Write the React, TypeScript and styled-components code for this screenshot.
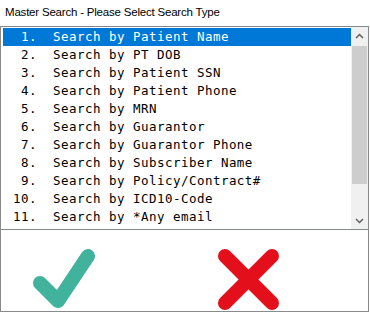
import React from 'react';
import styled, { createGlobalStyle } from 'styled-components';

const GlobalStyle = createGlobalStyle`
  html, body {
    margin: 0;
    padding: 0;
    background: #ffffff;
  }
`;

const Window = styled.div`
  width: 369px;
  height: 312px;
  display: flex;
  flex-direction: column;
  background: #ffffff;
  font-family: 'Liberation Sans', Arial, sans-serif;
`;

const TitleBar = styled.div`
  height: 26px;
  line-height: 25px;
  padding-left: 5px;
  font-size: 11.5px;
  letter-spacing: -0.2px;
  color: #000000;
  white-space: nowrap;
`;

const Frame = styled.div`
  flex: 1;
  display: flex;
  flex-direction: column;
  border: 1px solid #8a8a8a;
  border-top: none;
`;

const ListBox = styled.div`
  height: 202px;
  display: flex;
  border-top: 1px solid #828790;
  border-bottom: 1px solid #828790;
`;

const Rows = styled.div`
  flex: 1;
  padding: 1px 0 0 2px;
  display: flex;
  flex-direction: column;
`;

const Row = styled.div<{ $selected?: boolean }>`
  height: 18px;
  line-height: 18px;
  padding-left: 2px;
  font-family: 'DejaVu Sans Mono', 'Liberation Mono', monospace;
  font-size: 12.5px;
  letter-spacing: 0.47px;
  white-space: pre;
  color: ${({ $selected }) => ($selected ? '#ffffff' : '#000000')};
  background: ${({ $selected }) => ($selected ? '#0078d7' : 'transparent')};
`;

const ScrollBar = styled.div`
  width: 17px;
  background: #f0f0f0;
  display: flex;
  flex-direction: column;
`;

const ArrowBox = styled.div`
  height: 17px;
  display: flex;
  align-items: center;
  justify-content: center;
`;

const Track = styled.div`
  flex: 1;
  padding: 2px 1px 0;
  display: flex;
  flex-direction: column;
`;

const Thumb = styled.div`
  height: 138px;
  background: #cdcdcd;
`;

const ButtonRow = styled.div`
  flex: 1;
  display: flex;
  align-items: flex-start;
  padding: 17px 0 0 30px;
  gap: 119px;
`;

const IconButton = styled.button`
  padding: 0;
  margin: 0;
  border: none;
  background: transparent;
  display: block;
  line-height: 0;
  cursor: pointer;
`;

const items = [
  'Search by Patient Name',
  'Search by PT DOB',
  'Search by Patient SSN',
  'Search by Patient Phone',
  'Search by MRN',
  'Search by Guarantor',
  'Search by Guarantor Phone',
  'Search by Subscriber Name',
  'Search by Policy/Contract#',
  'Search by ICD10-Code',
  'Search by *Any email',
];

const Chevron = ({ up }: { up?: boolean }) => (
  <svg width="9" height="6" viewBox="0 0 9 6">
    <polyline
      points={up ? '1,5 4.5,1.5 8,5' : '1,1 4.5,4.5 8,1'}
      fill="none"
      stroke="#606060"
      strokeWidth="1.5"
    />
  </svg>
);

export default function App() {
  return (
    <>
      <GlobalStyle />
      <Window>
        <TitleBar>Master Search - Please Select Search Type</TitleBar>
        <Frame>
          <ListBox>
            <Rows>
              {items.map((label, i) => (
                <Row key={label} $selected={i === 0}>
                  {`${String(i + 1).padStart(3, ' ')}.  ${label}`}
                </Row>
              ))}
            </Rows>
            <ScrollBar>
              <ArrowBox>
                <Chevron up />
              </ArrowBox>
              <Track>
                <Thumb />
              </Track>
              <ArrowBox>
                <Chevron />
              </ArrowBox>
            </ScrollBar>
          </ListBox>
          <ButtonRow>
            <IconButton aria-label="OK">
              <svg width="66" height="64" viewBox="0 0 66 64">
                <polyline
                  points="9,36 27,54 57,9"
                  fill="none"
                  stroke="#41b39c"
                  strokeWidth="14"
                  strokeLinecap="round"
                  strokeLinejoin="round"
                />
              </svg>
            </IconButton>
            <IconButton aria-label="Cancel">
              <svg width="66" height="64" viewBox="0 0 66 64">
                <g stroke="#e3101c" strokeWidth="14" strokeLinecap="round">
                  <line x1="9" y1="9" x2="56" y2="56" />
                  <line x1="56" y1="9" x2="9" y2="56" />
                </g>
              </svg>
            </IconButton>
          </ButtonRow>
        </Frame>
      </Window>
    </>
  );
}
